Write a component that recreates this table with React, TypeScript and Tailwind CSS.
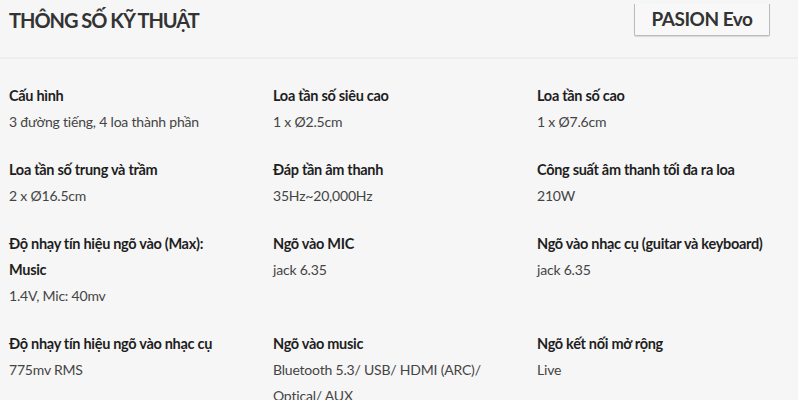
import React from 'react'

type Spec = { label: React.ReactNode; value: React.ReactNode }

const specs: Spec[] = [
  { label: 'Cấu hình', value: '3 đường tiếng, 4 loa thành phần' },
  { label: 'Loa tần số siêu cao', value: '1 x Ø2.5cm' },
  { label: 'Loa tần số cao', value: '1 x Ø7.6cm' },
  { label: 'Loa tần số trung và trầm', value: '2 x Ø16.5cm' },
  { label: 'Đáp tần âm thanh', value: '35Hz~20,000Hz' },
  { label: 'Công suất âm thanh tối đa ra loa', value: '210W' },
  { label: <>Độ nhạy tín hiệu ngõ vào (Max):<br />Music</>, value: '1.4V, Mic: 40mv' },
  { label: 'Ngõ vào MIC', value: 'jack 6.35' },
  { label: 'Ngõ vào nhạc cụ (guitar và keyboard)', value: 'jack 6.35' },
  { label: 'Độ nhạy tín hiệu ngõ vào nhạc cụ', value: '775mv RMS' },
  { label: 'Ngõ vào music', value: <>Bluetooth 5.3/ USB/ HDMI (ARC)/<br />Optical/ AUX</> },
  { label: 'Ngõ kết nối mở rộng', value: 'Live' },
]

function SpecItem({ label, value }: Spec) {
  return (
    <div className="leading-[26px] whitespace-nowrap">
      <div className="text-[14.5px] font-bold text-[#1e1e1e] tracking-[-0.3px]">{label}</div>
      <div className="text-[14px] text-[#444] tracking-[-0.2px]">{value}</div>
    </div>
  )
}

export default function App() {
  return (
    <div className="w-[798px] h-[400px] overflow-hidden bg-[#f6f6f6]" style={{ fontFamily: '"Lato", "Noto Sans", sans-serif' }}>
      <div className="flex items-start justify-between h-[59px] px-[9px] border-b-2 border-[#eeeeee]">
        <h1 className="mt-[5px] text-[20px] leading-[30px] font-bold text-[#333] tracking-[-1px]">THÔNG SỐ KỸ THUẬT</h1>
        <div className="mt-[4px] mr-[19px] w-[136px] h-[32px] flex items-center justify-center border border-t-0 border-[#bbbbbb] rounded-b-[2px] bg-[#f8f8f8] shadow-[0_1px_1px_rgba(0,0,0,0.12)]">
          <span className="text-[19px] font-bold text-[#333] tracking-[-0.5px]">PASION Evo</span>
        </div>
      </div>
      <div className="grid grid-cols-[264px_264px_1fr] gap-y-[22px] px-[9px] pt-[24px]">
        {specs.map((s, i) => (
          <SpecItem key={i} label={s.label} value={s.value} />
        ))}
      </div>
    </div>
  )
}
